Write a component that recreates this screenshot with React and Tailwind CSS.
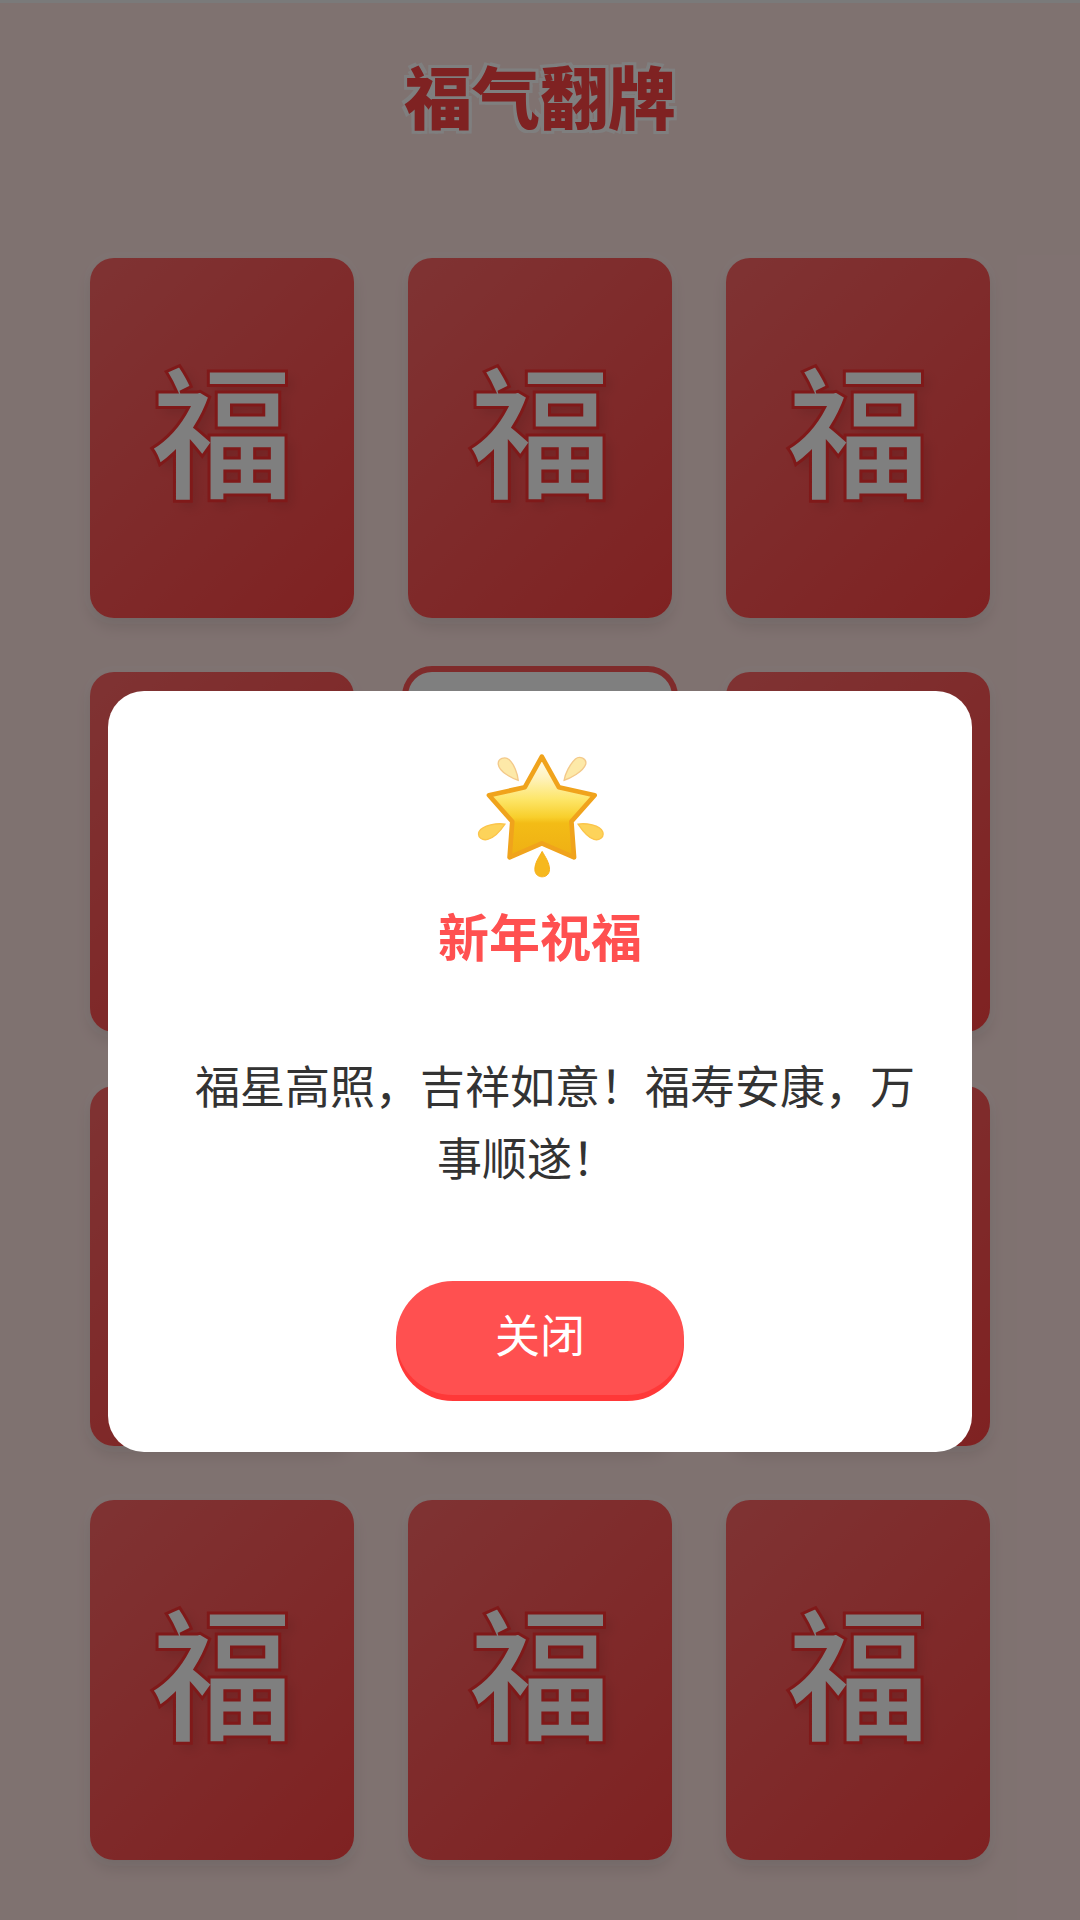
import React from "react";

const font = { fontFamily: '"Noto Sans CJK SC", "Noto Sans", sans-serif' };

const Star = () => (
  <svg viewBox="288 338 382 379" className="w-[127px] h-[126px]">
    <defs>
      <linearGradient id="starFill" x1="0" y1="0" x2="0" y2="1">
        <stop offset="0" stopColor="#fffdf2" />
        <stop offset="0.2" stopColor="#fff3c0" />
        <stop offset="0.42" stopColor="#fde66a" />
        <stop offset="0.6" stopColor="#f8cf2c" />
        <stop offset="0.66" stopColor="#f3bc16" />
        <stop offset="1" stopColor="#efaf14" />
      </linearGradient>
    </defs>
    <path
      d="M483 349 L534 441 L642 465 L572 544 L580 652 L483 610 L386 652 L394 544 L324 465 L432 441 Z"
      fill="url(#starFill)"
      stroke="#f0a31c"
      strokeWidth="14"
      strokeLinejoin="round"
    />
    <path d="M412 420 C395 415 355 395 352 372 C350 355 372 347 385 358 C400 372 410 400 412 420 Z" fill="#fde9a8" stroke="#f3c98a" strokeWidth="4" />
    <path d="M550 420 C567 415 607 395 615 372 C619 355 597 345 584 356 C567 372 553 400 550 420 Z" fill="#fde9a8" stroke="#f3c98a" strokeWidth="4" />
    <path d="M372 552 C350 548 305 555 294 575 C288 592 305 602 320 598 C340 593 360 570 372 552 Z" fill="#fdd35a" stroke="#fbc44a" strokeWidth="4" />
    <path d="M592 552 C614 548 659 555 666 575 C672 592 655 602 640 598 C622 593 604 570 592 552 Z" fill="#fdd35a" stroke="#fbc44a" strokeWidth="4" />
    <path d="M484 634 C475 650 462 668 462 688 C462 718 506 718 506 688 C506 668 493 650 484 634 Z" fill="#f6b81e" stroke="#f6ae18" strokeWidth="3" />
  </svg>
);

const Card = ({ flipped }) =>
  flipped ? (
    <div className="h-[360px] rounded-[24px] bg-white shadow-[0_0_0_6px_#ff5757]" />
  ) : (
    <div className="h-[360px] rounded-[24px] pb-[26px] bg-[linear-gradient(135deg,#ff6666,#ff4444)] flex items-center justify-center shadow-[0_0_0_6px_rgba(255,255,255,0.12),0_9px_15px_rgba(0,0,0,0.1)]">
      <span className="text-[144px] leading-none font-bold text-white [-webkit-text-stroke:3px_#ff3333] [text-shadow:6px_6px_12px_rgba(0,0,0,0.1)]">
        福
      </span>
    </div>
  );

const App = () => {
  const cards = Array.from({ length: 12 }, (_, i) => i);

  return (
    <div className="relative w-[1080px] h-[1920px] overflow-hidden bg-[#ffe4e1]" style={font}>
      <div className="h-[3px] bg-[#f4f4f4]" />

      {/* board */}
      <h1 className="pt-[44px] text-center text-[68px] leading-[96px] font-black text-[#ff4444] [text-shadow:3px_3px_0_#fff,-3px_-3px_0_#fff,3px_-3px_0_#fff,-3px_3px_0_#fff]">
        福气翻牌
      </h1>
      <div className="mt-[115px] px-[90px] grid grid-cols-3 gap-[54px]">
        {cards.map((i) => (
          <Card key={i} flipped={i === 4} />
        ))}
      </div>

      {/* overlay */}
      <div className="absolute inset-0 bg-black/50" />

      {/* modal */}
      <div className="absolute left-[108px] top-[691px] w-[864px] h-[761px] bg-white rounded-[36px] pt-[62px] flex flex-col items-center">
        <Star />
        <h2 className="mt-[20px] text-[51px] leading-[72px] font-bold text-[#ff5050]">新年祝福</h2>
        <p className="mt-[78px] w-[804px] text-[45px] leading-[72px] text-[#333333] text-center">
          <span className="block pl-[30px] whitespace-nowrap">福星高照，吉祥如意！福寿安康，万</span>
          <span className="block pr-[26px] whitespace-nowrap">事顺遂！</span>
        </p>
        <button className="mt-[88px] w-[288px] h-[114px] pb-[8px] rounded-full bg-[#ff5050] text-white text-[45px] shadow-[0_6px_0_#ff3838]">
          关闭
        </button>
      </div>
    </div>
  );
};

export default App;
